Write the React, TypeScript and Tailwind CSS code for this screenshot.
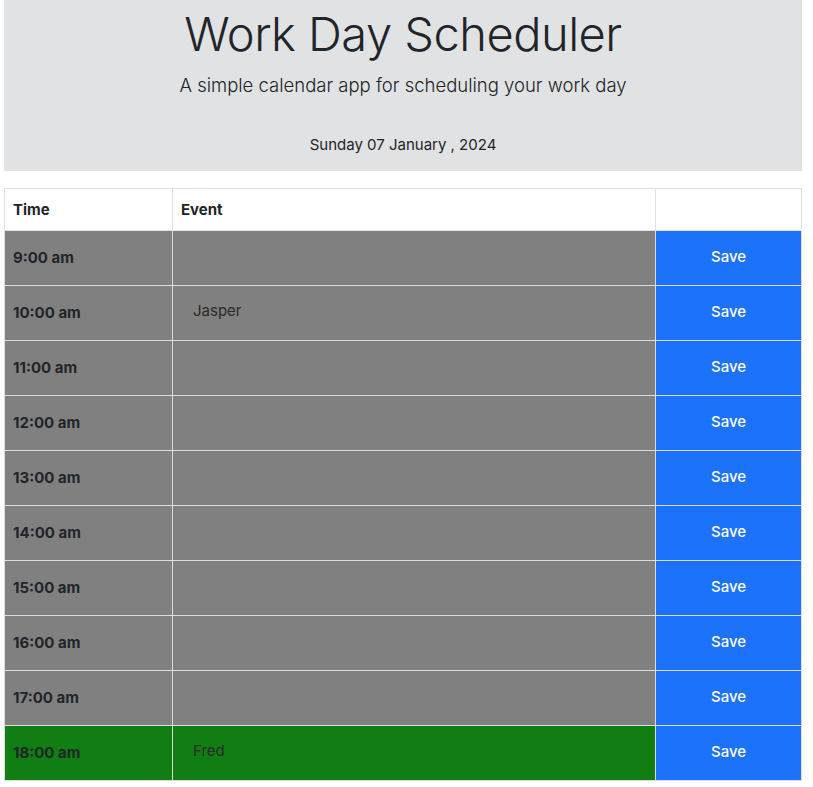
const hours = [9, 10, 11, 12, 13, 14, 15, 16, 17, 18];

const events: Record<number, string> = {
  10: 'Jasper',
  18: 'Fred',
};

function rowColour(hour: number) {
  // past hours are grey, the current one green
  if (hour < 18) return 'bg-[#808080]';
  return 'bg-[#107e12]';
}

export default function App() {
  return (
    <div className="min-h-screen bg-white px-1 text-[#212529] font-['Inter',sans-serif]">
      <header className="flex h-[171px] w-[798px] flex-col items-center bg-[#e1e2e4] pt-[6px]">
        <h1 className="text-[47px] font-light leading-[56px] tracking-[-0.5px]">Work Day Scheduler</h1>
        <p className="mt-[11px] text-[18.5px] font-light leading-6">A simple calendar app for scheduling your work day</p>
        <p className="mt-[36px] text-[15px] leading-6">Sunday 07 January , 2024</p>
      </header>

      <table className="mt-[17px] w-[798px] border-collapse border border-[#dee2e6] text-[15px]">
        <thead>
          <tr className="h-[41.5px] bg-white">
            <th className="w-[168px] border border-[#dee2e6] px-2 pt-[1px] text-left font-bold">Time</th>
            <th className="border border-[#dee2e6] px-2 pt-[1px] text-left font-bold">Event</th>
            <th className="w-[146px] border border-[#dee2e6]"></th>
          </tr>
        </thead>
        <tbody>
          {hours.map((hour) => (
            <tr key={hour} className={`h-[55px] ${rowColour(hour)}`}>
              <td className="border border-[#dcdcdc] px-2 pt-[2px] font-bold">{hour}:00 am</td>
              <td className="border border-[#dcdcdc] px-5 pb-[3px] align-middle text-[#2a2a2a]">
                {events[hour] ?? ''}
              </td>
              <td className="border border-[#dcdcdc] bg-[#1c72f8] text-center font-medium text-white">Save</td>
            </tr>
          ))}
        </tbody>
      </table>
    </div>
  );
}
